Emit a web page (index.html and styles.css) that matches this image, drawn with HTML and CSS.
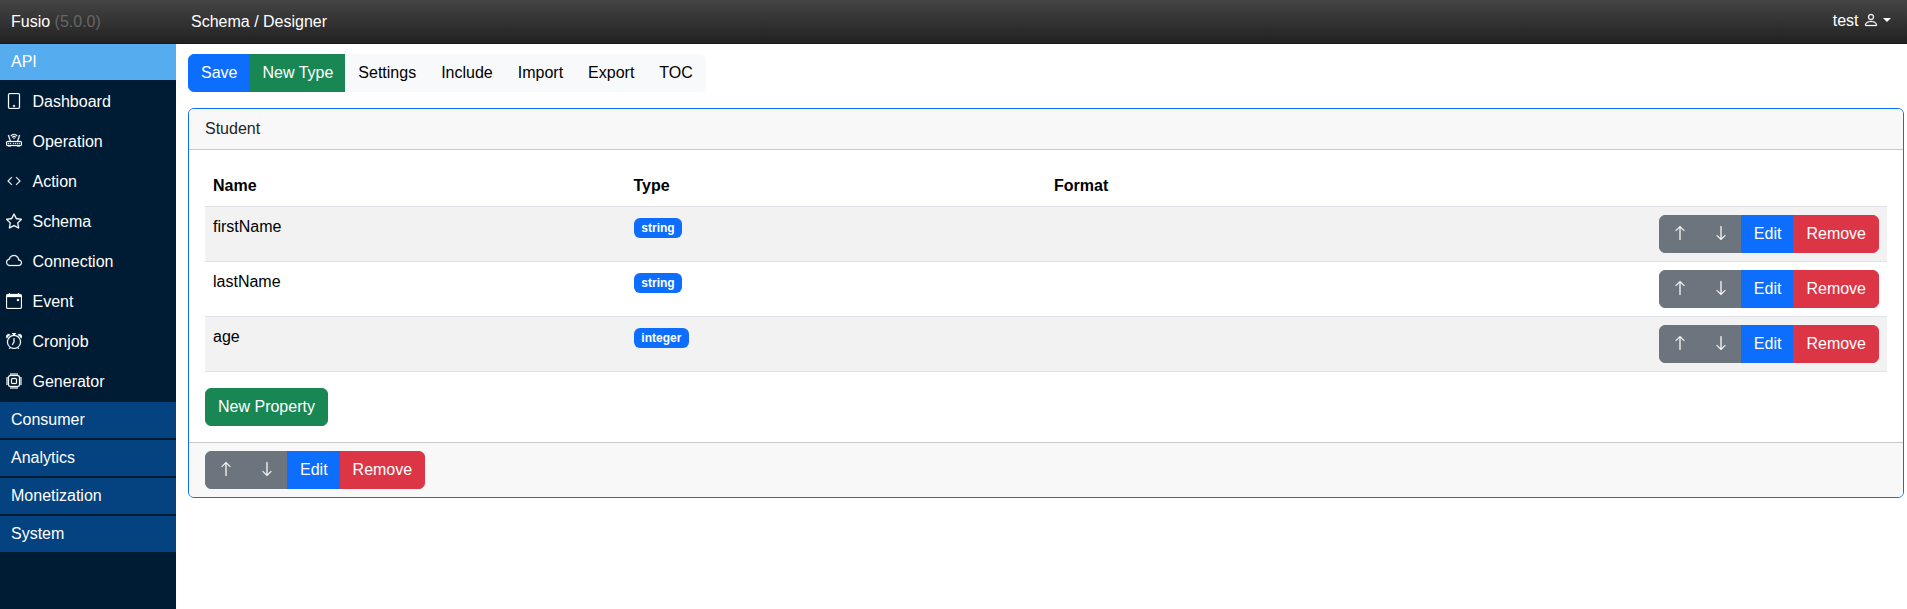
FILE: index.html
```html
<!DOCTYPE html>
<html lang="en">
<head>
<meta charset="utf-8">
<title>Fusio</title>
<link rel="stylesheet" href="styles.css">
</head>
<body>
<svg class="sprite" aria-hidden="true">
  <symbol id="tablet" viewBox="0 0 16 16"><path d="M12 1a1 1 0 0 1 1 1v12a1 1 0 0 1-1 1H4a1 1 0 0 1-1-1V2a1 1 0 0 1 1-1zM4 0a2 2 0 0 0-2 2v12a2 2 0 0 0 2 2h8a2 2 0 0 0 2-2V2a2 2 0 0 0-2-2z"/><path d="M8 14a1 1 0 1 0 0-2 1 1 0 0 0 0 2"/></symbol>
  <symbol id="router" viewBox="0 0 16 16"><path d="M5.525 3.025a3.5 3.5 0 0 1 4.95 0 .5.5 0 1 0 .707-.707 4.5 4.5 0 0 0-6.364 0 .5.5 0 0 0 .707.707M6.94 4.44a1.5 1.5 0 0 1 2.12 0 .5.5 0 0 0 .708-.708 2.5 2.5 0 0 0-3.536 0 .5.5 0 0 0 .707.707ZM2.5 11a.5.5 0 1 1 0-1 .5.5 0 0 1 0 1m2 0a.5.5 0 1 1 0-1 .5.5 0 0 1 0 1m2.5-.5a.5.5 0 1 0 1 0 .5.5 0 0 0-1 0m2.5.5a.5.5 0 1 1 0-1 .5.5 0 0 1 0 1m1.5-.5a.5.5 0 1 0 1 0 .5.5 0 0 0-1 0m2 0a.5.5 0 1 0 1 0 .5.5 0 0 0-1 0M8.5 5.5a.5.5 0 1 1-1 0 .5.5 0 0 1 1 0"/><path d="M2.974 2.342a.5.5 0 1 0-.948.316L3.806 8H1.5A1.5 1.5 0 0 0 0 9.5v2A1.5 1.5 0 0 0 1.5 13H2a.5.5 0 0 0 .5.5h2A.5.5 0 0 0 5 13h6a.5.5 0 0 0 .5.5h2a.5.5 0 0 0 .5-.5h.5a1.5 1.5 0 0 0 1.5-1.5v-2A1.5 1.5 0 0 0 14.5 8h-2.306l1.78-5.342a.5.5 0 1 0-.948-.316L11.14 8H4.86zM14.5 9a.5.5 0 0 1 .5.5v2a.5.5 0 0 1-.5.5h-13a.5.5 0 0 1-.5-.5v-2a.5.5 0 0 1 .5-.5z"/></symbol>
  <symbol id="code" viewBox="0 0 16 16"><path d="M5.854 4.854a.5.5 0 1 0-.708-.708l-3.5 3.5a.5.5 0 0 0 0 .708l3.5 3.5a.5.5 0 0 0 .708-.708L2.707 8zm4.292 0a.5.5 0 0 1 .708-.708l3.5 3.5a.5.5 0 0 1 0 .708l-3.5 3.5a.5.5 0 0 1-.708-.708L13.293 8z"/></symbol>
  <symbol id="star" viewBox="0 0 16 16"><path d="M2.866 14.85c-.078.444.36.791.746.593l4.39-2.256 4.389 2.256c.386.198.824-.149.746-.592l-.83-4.73 3.522-3.356c.33-.314.16-.888-.282-.95l-4.898-.696L8.465.792a.513.513 0 0 0-.927 0L5.354 5.12l-4.898.696c-.441.062-.612.636-.283.95l3.523 3.356zm4.905-2.767-3.686 1.894.694-3.957a.56.56 0 0 0-.163-.505L1.71 6.745l4.052-.576a.53.53 0 0 0 .393-.288L8 2.223l1.847 3.658a.53.53 0 0 0 .393.288l4.052.575-2.906 2.77a.56.56 0 0 0-.163.506l.694 3.957-3.686-1.894a.5.5 0 0 0-.461 0z"/></symbol>
  <symbol id="cloud" viewBox="0 0 16 16"><path d="M4.406 3.342A5.53 5.53 0 0 1 8 2c2.69 0 4.923 2 5.166 4.579C14.758 6.804 16 8.137 16 9.773 16 11.569 14.502 13 12.687 13H3.781C1.708 13 0 11.366 0 9.318c0-1.763 1.266-3.223 2.942-3.593.143-.863.698-1.723 1.464-2.383m.653.757c-.757.653-1.153 1.44-1.153 2.056v.448l-.445.049C2.064 6.805 1 7.952 1 9.318 1 10.785 2.23 12 3.781 12h8.906C13.98 12 15 10.988 15 9.773c0-1.216-1.02-2.228-2.313-2.228h-.5v-.5C12.188 4.825 10.328 3 8 3a4.53 4.53 0 0 0-2.941 1.1z"/></symbol>
  <symbol id="calendar" viewBox="0 0 16 16"><path d="M11 6.5a.5.5 0 0 1 .5-.5h1a.5.5 0 0 1 .5.5v1a.5.5 0 0 1-.5.5h-1a.5.5 0 0 1-.5-.5z"/><path d="M3.5 0a.5.5 0 0 1 .5.5V1h8V.5a.5.5 0 0 1 1 0V1h1a2 2 0 0 1 2 2v11a2 2 0 0 1-2 2H2a2 2 0 0 1-2-2V3a2 2 0 0 1 2-2h1V.5a.5.5 0 0 1 .5-.5M1 4v10a1 1 0 0 0 1 1h12a1 1 0 0 0 1-1V4z"/></symbol>
  <symbol id="alarm" viewBox="0 0 16 16"><path d="M8.5 5.5a.5.5 0 0 0-1 0v3.362l-1.429 2.38a.5.5 0 1 0 .858.515l1.5-2.5A.5.5 0 0 0 8.5 9z"/><path d="M6.5 0a.5.5 0 0 0 0 1H7v1.07a7.001 7.001 0 0 0-3.273 12.474l-.602.602a.5.5 0 0 0 .707.708l.746-.746A6.97 6.97 0 0 0 8 16a6.97 6.97 0 0 0 3.422-.892l.746.746a.5.5 0 0 0 .707-.708l-.601-.602A7.001 7.001 0 0 0 9 2.07V1h.5a.5.5 0 0 0 0-1zm1.038 3.018a6 6 0 0 1 .924 0 6 6 0 1 1-.924 0M0 3.5c0 .753.333 1.429.86 1.887A8.04 8.04 0 0 1 4.387 1.86 2.5 2.5 0 0 0 0 3.5M13.5 1c-.753 0-1.429.333-1.887.86a8.04 8.04 0 0 1 3.527 3.527A2.5 2.5 0 0 0 13.5 1"/></symbol>
  <symbol id="cpu" viewBox="0 0 16 16"><path d="M5 0a.5.5 0 0 1 .5.5V2h1V.5a.5.5 0 0 1 1 0V2h1V.5a.5.5 0 0 1 1 0V2h1V.5a.5.5 0 0 1 1 0V2A2.5 2.5 0 0 1 14 4.5h1.5a.5.5 0 0 1 0 1H14v1h1.5a.5.5 0 0 1 0 1H14v1h1.5a.5.5 0 0 1 0 1H14v1h1.5a.5.5 0 0 1 0 1H14a2.5 2.5 0 0 1-2.5 2.5v1.5a.5.5 0 0 1-1 0V14h-1v1.5a.5.5 0 0 1-1 0V14h-1v1.5a.5.5 0 0 1-1 0V14h-1v1.5a.5.5 0 0 1-1 0V14A2.5 2.5 0 0 1 2 11.5H.5a.5.5 0 0 1 0-1H2v-1H.5a.5.5 0 0 1 0-1H2v-1H.5a.5.5 0 0 1 0-1H2v-1H.5a.5.5 0 0 1 0-1H2A2.5 2.5 0 0 1 4.5 2V.5A.5.5 0 0 1 5 0m-.5 3A1.5 1.5 0 0 0 3 4.5v7A1.5 1.5 0 0 0 4.5 13h7a1.5 1.5 0 0 0 1.5-1.5v-7A1.5 1.5 0 0 0 11.5 3zM5 6.500A1.5 1.5 0 0 1 6.500 5h3A1.5 1.5 0 0 1 11 6.500v3A1.5 1.5 0 0 1 9.500 11h-3A1.5 1.5 0 0 1 5 9.500zM6.500 6a.5.5 0 0 0-.5.5v3a.5.5 0 0 0 .5.5h3a.5.5 0 0 0 .5-.5v-3a.5.5 0 0 0-.5-.5z"/></symbol>
  <symbol id="person" viewBox="0 0 16 16"><path d="M8 8a3 3 0 1 0 0-6 3 3 0 0 0 0 6m2-3a2 2 0 1 1-4 0 2 2 0 0 1 4 0m4 8c0 1-1 1-1 1H3s-1 0-1-1 1-4 6-4 6 3 6 4m-1-.004c-.001-.246-.154-.986-.832-1.664C11.516 10.68 10.289 10 8 10s-3.516.68-4.168 1.332c-.678.678-.83 1.418-.832 1.664z"/></symbol>
  <symbol id="up" viewBox="0 0 16 16"><path d="M8 15a.5.5 0 0 0 .5-.5V2.707l3.146 3.147a.5.5 0 0 0 .708-.708l-4-4a.5.5 0 0 0-.708 0l-4 4a.5.5 0 1 0 .708.708L7.5 2.707V14.5a.5.5 0 0 0 .5.5"/></symbol>
  <symbol id="down" viewBox="0 0 16 16"><path d="M8 1a.5.5 0 0 1 .5.5v11.793l3.146-3.147a.5.5 0 0 1 .708.708l-4 4a.5.5 0 0 1-.708 0l-4-4a.5.5 0 0 1 .708-.708L7.5 13.293V1.5A.5.5 0 0 1 8 1"/></symbol>
</svg>

<header class="topbar">
  <div class="brand">Fusio <span class="version">(5.0.0)</span></div>
  <div class="crumb">Schema / Designer</div>
  <div class="user">test <svg class="icon"><use href="#person"/></svg><span class="caret"></span></div>
</header>

<div class="layout">
  <nav class="sidebar">
    <a class="section active">API</a>
    <a class="item"><svg class="icon"><use href="#tablet"/></svg>Dashboard</a>
    <a class="item"><svg class="icon"><use href="#router"/></svg>Operation</a>
    <a class="item"><svg class="icon"><use href="#code"/></svg>Action</a>
    <a class="item"><svg class="icon"><use href="#star"/></svg>Schema</a>
    <a class="item"><svg class="icon"><use href="#cloud"/></svg>Connection</a>
    <a class="item"><svg class="icon"><use href="#calendar"/></svg>Event</a>
    <a class="item"><svg class="icon"><use href="#alarm"/></svg>Cronjob</a>
    <a class="item"><svg class="icon"><use href="#cpu"/></svg>Generator</a>
    <a class="section">Consumer</a>
    <a class="section">Analytics</a>
    <a class="section">Monetization</a>
    <a class="section">System</a>
  </nav>

  <main class="content">
    <div class="btn-group toolbar">
      <button class="btn primary">Save</button>
      <button class="btn success">New Type</button>
      <button class="btn light">Settings</button>
      <button class="btn light">Include</button>
      <button class="btn light">Import</button>
      <button class="btn light">Export</button>
      <button class="btn light">TOC</button>
    </div>

    <section class="card">
      <div class="card-header">Student</div>
      <div class="card-body">
        <table class="table">
          <thead><tr><th>Name</th><th>Type</th><th>Format</th><th></th></tr></thead>
          <tbody>
            <tr><td>firstName</td><td><span class="badge">string</span></td><td></td>
              <td class="actions"><div class="btn-group"><button class="btn secondary"><svg class="icon"><use href="#up"/></svg></button><button class="btn secondary"><svg class="icon"><use href="#down"/></svg></button><button class="btn primary">Edit</button><button class="btn danger">Remove</button></div></td></tr>
            <tr><td>lastName</td><td><span class="badge">string</span></td><td></td>
              <td class="actions"><div class="btn-group"><button class="btn secondary"><svg class="icon"><use href="#up"/></svg></button><button class="btn secondary"><svg class="icon"><use href="#down"/></svg></button><button class="btn primary">Edit</button><button class="btn danger">Remove</button></div></td></tr>
            <tr><td>age</td><td><span class="badge">integer</span></td><td></td>
              <td class="actions"><div class="btn-group"><button class="btn secondary"><svg class="icon"><use href="#up"/></svg></button><button class="btn secondary"><svg class="icon"><use href="#down"/></svg></button><button class="btn primary">Edit</button><button class="btn danger">Remove</button></div></td></tr>
          </tbody>
        </table>
        <button class="btn success">New Property</button>
      </div>
      <div class="card-footer"><div class="btn-group"><button class="btn secondary"><svg class="icon"><use href="#up"/></svg></button><button class="btn secondary"><svg class="icon"><use href="#down"/></svg></button><button class="btn primary">Edit</button><button class="btn danger">Remove</button></div></div>
    </section>
  </main>
</div>
</body>
</html>
```

FILE: styles.css
```css
* { box-sizing: border-box; }

body {
  margin: 0;
  height: 100vh;
  display: flex;
  flex-direction: column;
  overflow: hidden;
  font: 16px/24px "Liberation Sans", Arial, sans-serif;
  color: #212529;
  background: #fff;
}

.sprite { display: none; }

.icon {
  width: 16px;
  height: 16px;
  flex: none;
  margin-bottom: 2px;
  fill: currentColor;
  stroke: currentColor;
  stroke-width: 0.25px;
  overflow: visible;
}

.topbar {
  flex: none;
  height: 44px;
  display: flex;
  align-items: center;
  padding: 0 16px 1px 11px;
  color: #fff;
  background: linear-gradient(#444, #222);
  border-bottom: 1px solid #0d1a26;
}

.brand,
.crumb { padding-top: 2px; }
.brand { width: 180px; }
.version { color: #666; }
.crumb { flex: 1; }

.user {
  display: flex;
  align-items: center;
  white-space: pre;
}

.caret {
  margin: 0 0 2px 4px;
  border: 4.8px solid transparent;
  border-top-color: currentColor;
  border-bottom: 0;
  border-left-width: 4px;
  border-right-width: 4px;
}

.layout {
  flex: 1;
  display: flex;
  min-height: 0;
}

.sidebar {
  flex: none;
  width: 176px;
  background: #001b34;
  color: #fff;
}

.section {
  display: block;
  height: 36px;
  margin-bottom: 2px;
  padding: 6px 11px;
  background: #044380;
}

.section.active { background: #55acee; }

.item {
  display: flex;
  align-items: center;
  gap: 10.5px;
  height: 40px;
  padding: 0 6px;
}

.content {
  flex: 1;
  padding: 10px 3px 0 12px;
}

.btn-group { display: inline-flex; }
.toolbar { display: flex; margin-bottom: 16px; }

.btn {
  display: inline-flex;
  align-items: center;
  height: 38px;
  margin: 0;
  padding: 6px 12px;
  border: 1px solid transparent;
  border-radius: 6px;
  font: inherit;
  color: #fff;
}

.btn-group .btn { border-radius: 0; }
.btn-group .btn + .btn { margin-left: -1px; }
.btn-group .btn:first-child { border-radius: 6px 0 0 6px; }
.btn-group .btn:last-child { border-radius: 0 6px 6px 0; }

.primary { background: #0d6efd; border-color: #0d6efd; }
.success { background: #198754; border-color: #198754; }
.secondary { background: #6c757d; border-color: #6c757d; }
.danger { background: #dc3545; border-color: #dc3545; }
.light { background: #f8f9fa; border-color: #f8f9fa; color: #000; }

.card {
  border: 1px solid #0d6efd;
  border-radius: 6px;
  overflow: hidden;
}

.card-header {
  padding: 8px 16px;
  background: #f8f8f8;
  border-bottom: 1px solid #c8c9ca;
}

.card-body { padding: 16px; }

.card-footer {
  display: flex;
  padding: 8px 16px;
  background: #f8f8f8;
  border-top: 1px solid #c8c9ca;
}

.card-body > .btn { display: flex; }

.table {
  width: 100%;
  margin-bottom: 16px;
  table-layout: fixed;
  border-collapse: separate;
  border-spacing: 0;
  color: #000;
}

.table th,
.table td {
  padding: 8px;
  border-bottom: 1px solid #dee2e6;
  text-align: left;
  vertical-align: top;
}

.table th { height: 41px; }
.table td { height: 55px; }
.table tbody tr:nth-child(odd) td { background: #f2f2f2; }

.table .actions { text-align: right; line-height: 0; }
.actions .btn { line-height: 24px; }

.badge {
  display: inline-block;
  padding: 4.2px 7.8px;
  border-radius: 6px;
  background: #0d6efd;
  color: #fff;
  font-size: 12px;
  font-weight: 700;
  line-height: 12px;
}
```
